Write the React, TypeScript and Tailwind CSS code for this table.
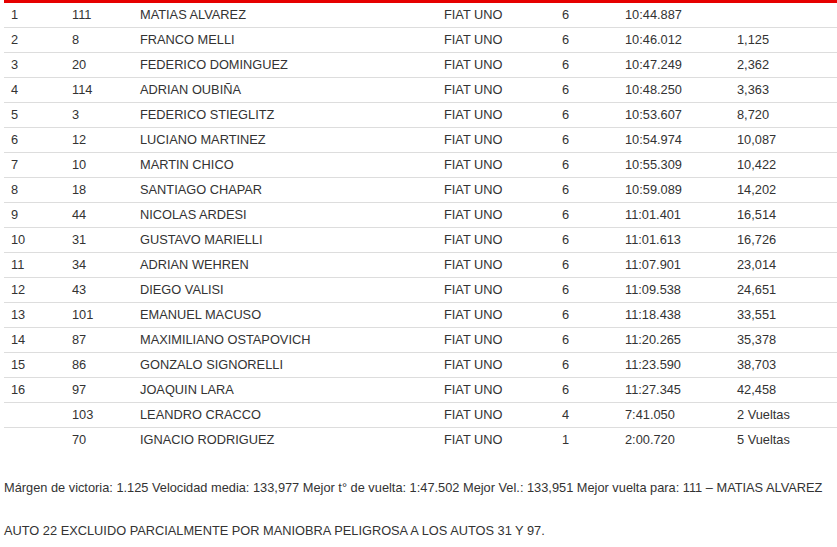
import React from 'react';

type Row = [string, string, string, string, string, string, string];

const rows: Row[] = [
    ['1', '111', 'MATIAS ALVAREZ', 'FIAT UNO', '6', '10:44.887', ''],
    ['2', '8', 'FRANCO MELLI', 'FIAT UNO', '6', '10:46.012', '1,125'],
    ['3', '20', 'FEDERICO DOMINGUEZ', 'FIAT UNO', '6', '10:47.249', '2,362'],
    ['4', '114', 'ADRIAN OUBIÑA', 'FIAT UNO', '6', '10:48.250', '3,363'],
    ['5', '3', 'FEDERICO STIEGLITZ', 'FIAT UNO', '6', '10:53.607', '8,720'],
    ['6', '12', 'LUCIANO MARTINEZ', 'FIAT UNO', '6', '10:54.974', '10,087'],
    ['7', '10', 'MARTIN CHICO', 'FIAT UNO', '6', '10:55.309', '10,422'],
    ['8', '18', 'SANTIAGO CHAPAR', 'FIAT UNO', '6', '10:59.089', '14,202'],
    ['9', '44', 'NICOLAS ARDESI', 'FIAT UNO', '6', '11:01.401', '16,514'],
    ['10', '31', 'GUSTAVO MARIELLI', 'FIAT UNO', '6', '11:01.613', '16,726'],
    ['11', '34', 'ADRIAN WEHREN', 'FIAT UNO', '6', '11:07.901', '23,014'],
    ['12', '43', 'DIEGO VALISI', 'FIAT UNO', '6', '11:09.538', '24,651'],
    ['13', '101', 'EMANUEL MACUSO', 'FIAT UNO', '6', '11:18.438', '33,551'],
    ['14', '87', 'MAXIMILIANO OSTAPOVICH', 'FIAT UNO', '6', '11:20.265', '35,378'],
    ['15', '86', 'GONZALO SIGNORELLI', 'FIAT UNO', '6', '11:23.590', '38,703'],
    ['16', '97', 'JOAQUIN LARA', 'FIAT UNO', '6', '11:27.345', '42,458'],
    ['', '103', 'LEANDRO CRACCO', 'FIAT UNO', '4', '7:41.050', '2 Vueltas'],
    ['', '70', 'IGNACIO RODRIGUEZ', 'FIAT UNO', '1', '2:00.720', '5 Vueltas'],
];

const widths = ['w-[61px]', 'w-[68px]', 'w-[304px]', 'w-[118px]', 'w-[63px]', 'w-[112px]', 'w-[107px]'];

const App: React.FC = () => {
    return (
        <div className="min-h-[547px] bg-white pl-1 text-[#333] font-['Liberation_Sans',Arial,sans-serif] overflow-hidden">
            <table className="w-[833px] table-fixed border-collapse border-t-[3px] border-[#e60000] text-[12.8px]">
                <colgroup>
                    {widths.map((w, i) => <col key={i} className={w} />)}
                </colgroup>
                <tbody>
                    {rows.map((r, i) => (
                        <tr key={i} className="h-[25px] border-b border-[#dddddd] last:border-b-0 last:h-[24px]">
                            {r.map((c, j) => (
                                <td key={j} className="pl-[7px] py-0 leading-[24px] whitespace-nowrap">{c}</td>
                            ))}
                        </tr>
                    ))}
                </tbody>
            </table>
            <p className="mt-[26px] text-[12.8px] leading-[20px]">
                Márgen de victoria: 1.125 Velocidad media: 133,977 Mejor t° de vuelta: 1:47.502 Mejor Vel.: 133,951 Mejor vuelta para: 111 – MATIAS ALVAREZ
            </p>
            <p className="mt-[23px] text-[12.8px] leading-[20px]">
                AUTO 22 EXCLUIDO PARCIALMENTE POR MANIOBRA PELIGROSA A LOS AUTOS 31 Y 97.
            </p>
        </div>
    );
};

export default App;
